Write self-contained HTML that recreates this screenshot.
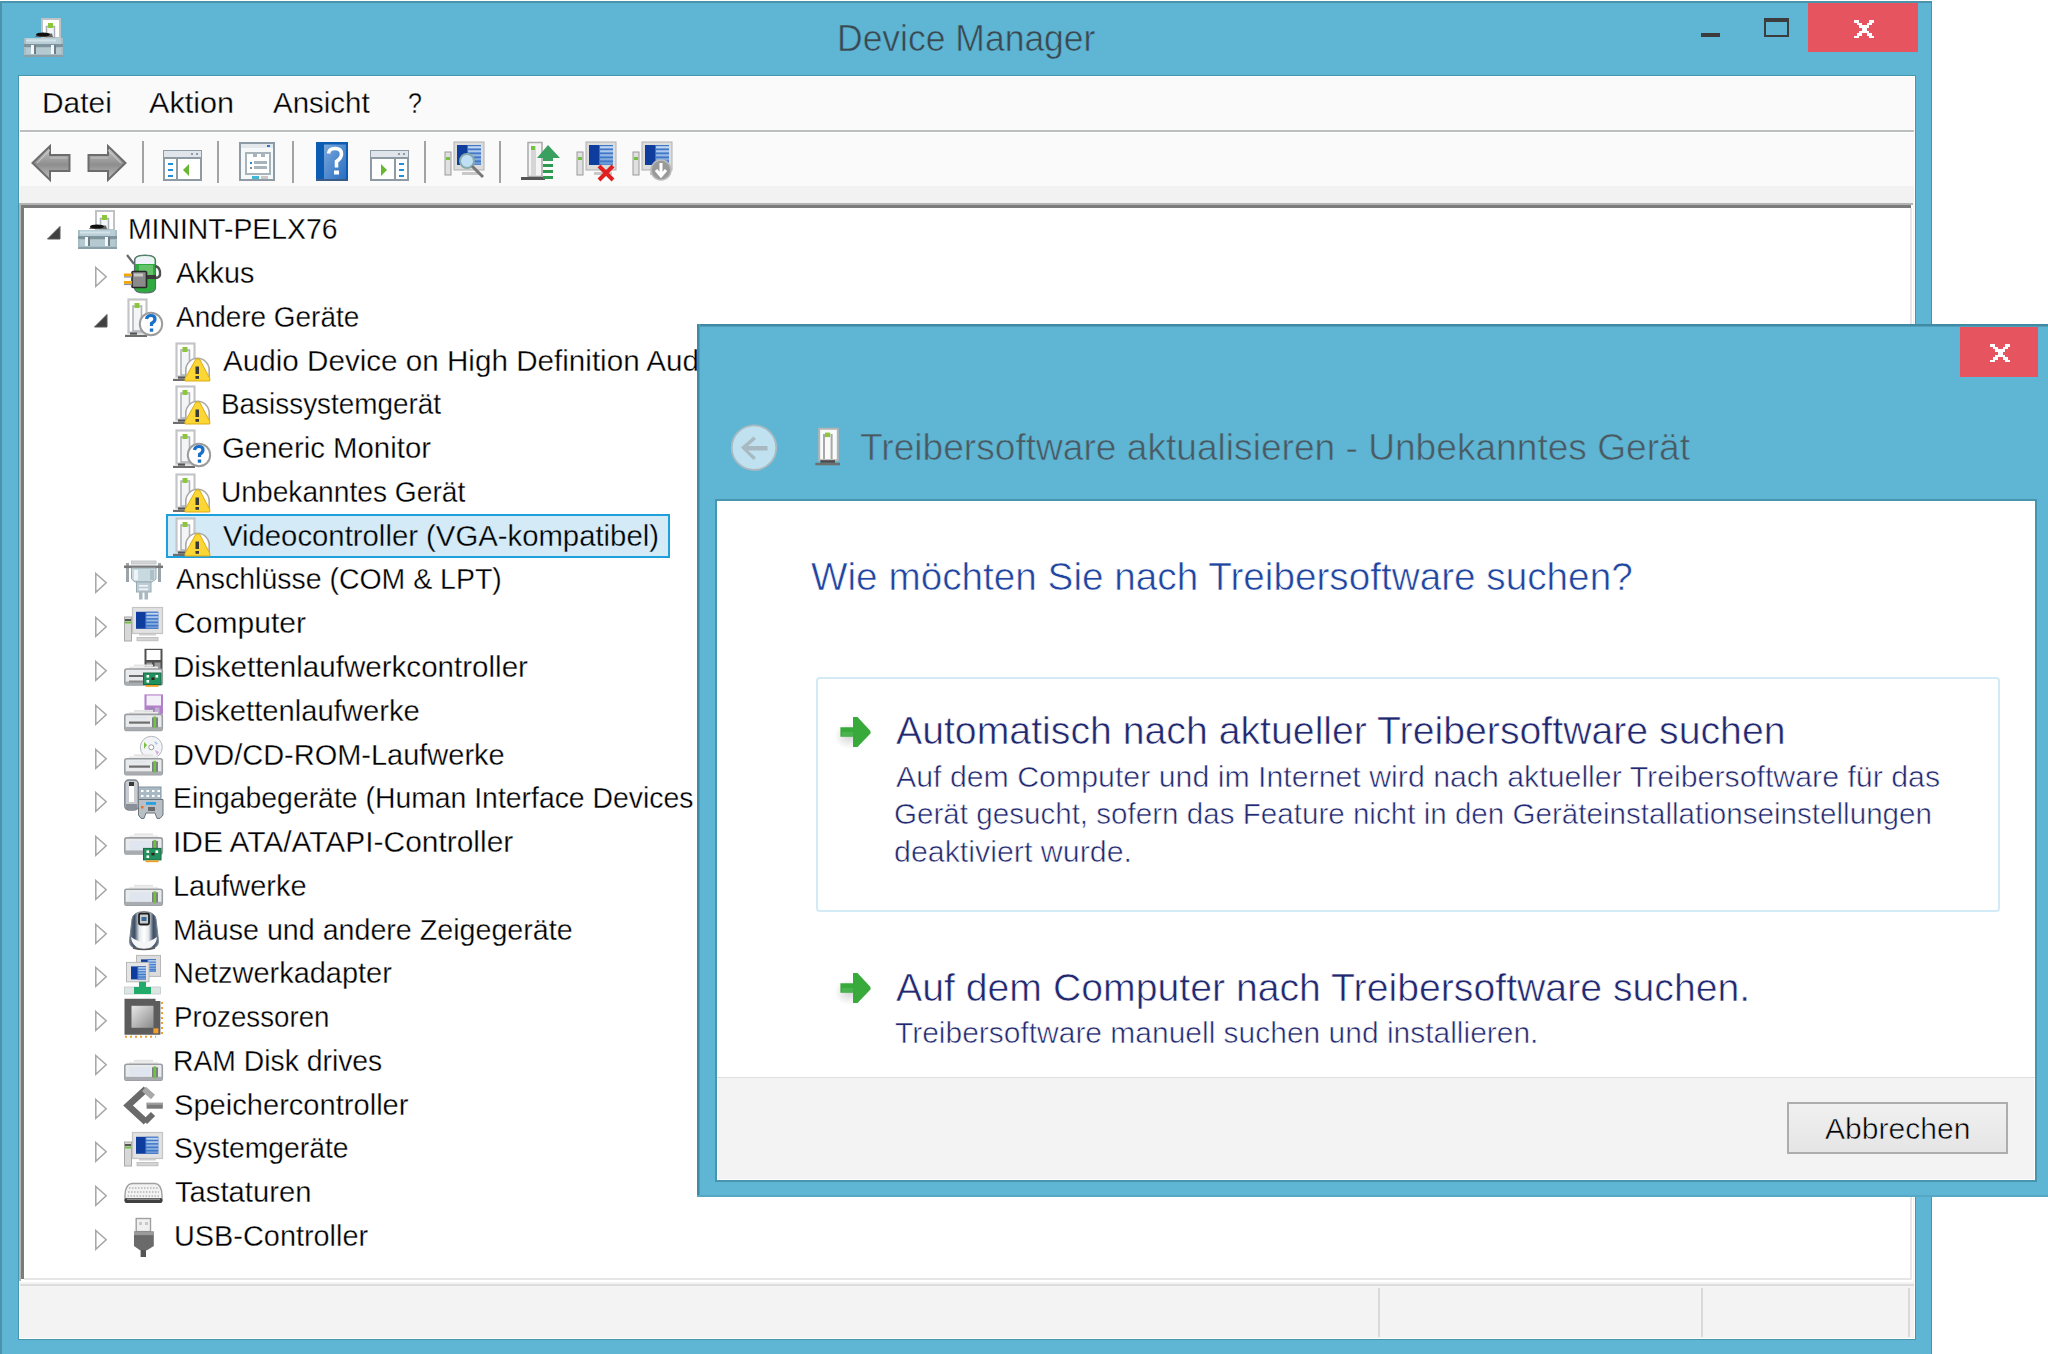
<!DOCTYPE html>
<html><head><meta charset="utf-8"><title>Device Manager</title>
<style>
html,body{margin:0;padding:0;width:2048px;height:1354px;overflow:hidden;background:#fff}
.t{position:absolute;white-space:nowrap;line-height:1;font-family:"Liberation Sans",sans-serif;transform-origin:0 0}
.b{position:absolute}
.i{position:absolute;overflow:visible}
</style></head><body>
<div class="b" style="left:0px;top:0px;width:2048px;height:1354px;background:#fff"></div>
<div class="b" style="left:0px;top:1px;width:1932px;height:1353px;background:#5fb6d4"></div>
<div class="b" style="left:0px;top:1px;width:1932px;height:2px;background:#4a93ad"></div>
<div class="b" style="left:0px;top:1px;width:2px;height:1353px;background:#4a93ad"></div>
<div class="b" style="left:1931px;top:1px;width:1px;height:1353px;background:#4a93ad"></div>
<svg width="0" height="0" style="position:absolute"><defs>
<linearGradient id="gArrow" x1="0" y1="0" x2="0" y2="1"><stop offset="0" stop-color="#c8c8c8"/><stop offset=".55" stop-color="#8e8e8e"/><stop offset="1" stop-color="#c0c0c0"/></linearGradient>
<linearGradient id="gBase" x1="0" y1="0" x2="0" y2="1"><stop offset="0" stop-color="#c9d3d8"/><stop offset="1" stop-color="#8c9ca5"/></linearGradient>
<linearGradient id="gDrive" x1="0" y1="0" x2="0" y2="1"><stop offset="0" stop-color="#f4f6f8"/><stop offset="1" stop-color="#c4c8cc"/></linearGradient>
<linearGradient id="gScreen" x1="0" y1="0" x2="1" y2="0"><stop offset="0" stop-color="#0d2f8c"/><stop offset=".45" stop-color="#1d4aa8"/><stop offset=".5" stop-color="#8fb3de"/><stop offset="1" stop-color="#c8dcf0"/></linearGradient>
<linearGradient id="gCpu" x1="0" y1="0" x2="1" y2="1"><stop offset="0" stop-color="#e8e8e8"/><stop offset="1" stop-color="#8a8a8a"/></linearGradient>
<linearGradient id="gBat" x1="0" y1="0" x2="1" y2="0"><stop offset="0" stop-color="#2f8a3a"/><stop offset=".5" stop-color="#69c06a"/><stop offset="1" stop-color="#2f8a3a"/></linearGradient>
<radialGradient id="gShadow"><stop offset="0" stop-color="#000" stop-opacity=".16"/><stop offset="1" stop-color="#000" stop-opacity="0"/></radialGradient>
</defs></svg><svg class="i" style="left:24px;top:18px" width="40" height="40" viewBox="0 0 40 40"><rect x="18" y="1" width="18" height="19" fill="#fff" stroke="#bfc3c6" stroke-width="2"/><rect x="22.5" y="8.5" width="8" height="11" fill="#f2f4f6" stroke="#a9b0b8" stroke-width="1.5"/><rect x="24" y="5" width="5" height="5" fill="#8cc63f"/><path d="M11 19 L13 16 L28 15.5 L29 19 Z" fill="#666"/><ellipse cx="19" cy="16.5" rx="7" ry="2" fill="#111"/><rect x="0" y="20" width="39" height="19" fill="#a9bdc5"/><rect x="2" y="20" width="35" height="6" fill="#b9ced6"/><rect x="2" y="21.5" width="30" height="2" fill="#d2e4ea"/><rect x="0" y="26" width="39" height="3" fill="#7e939b"/><rect x="2" y="30" width="35" height="6" fill="#b5c9d1"/><rect x="0" y="37" width="39" height="2" fill="#8aa0a8"/><rect x="7" y="27" width="3" height="9" fill="#f4f6f7"/><rect x="10" y="27" width="2" height="9" fill="#6d8088"/><rect x="27" y="27" width="3" height="9" fill="#f4f6f7"/><rect x="30" y="27" width="2" height="9" fill="#6d8088"/></svg>
<div class="t " style="left:837.2px;top:20.2px;font-size:37px;color:#3a4850;transform:scaleX(0.9592);-webkit-text-stroke:0.6px #5fb6d4;">Device Manager</div>
<div class="b" style="left:1701px;top:33px;width:19px;height:4px;background:#3c3c3c"></div>
<div class="b" style="left:1764px;top:18px;width:25px;height:19px;border:2px solid #3c3c3c;border-top-width:4px;box-sizing:border-box"></div>
<div class="b" style="left:1808px;top:3px;width:110px;height:49px;background:#e5545f"></div>
<svg class="i" style="left:1854.2px;top:20.2px" width="20.4" height="18.4" viewBox="0 0 20.40 18.41" fill="#fff" shape-rendering="crispEdges"><rect x="0.00" y="0.00" width="2.60" height="2.68"/><rect x="2.55" y="0.00" width="2.60" height="2.68"/><rect x="15.30" y="0.00" width="2.60" height="2.68"/><rect x="17.85" y="0.00" width="2.60" height="2.68"/><rect x="2.55" y="2.63" width="2.60" height="2.68"/><rect x="5.10" y="2.63" width="2.60" height="2.68"/><rect x="12.75" y="2.63" width="2.60" height="2.68"/><rect x="15.30" y="2.63" width="2.60" height="2.68"/><rect x="5.10" y="5.26" width="2.60" height="2.68"/><rect x="7.65" y="5.26" width="2.60" height="2.68"/><rect x="10.20" y="5.26" width="2.60" height="2.68"/><rect x="12.75" y="5.26" width="2.60" height="2.68"/><rect x="7.65" y="7.89" width="2.60" height="2.68"/><rect x="10.20" y="7.89" width="2.60" height="2.68"/><rect x="5.10" y="10.52" width="2.60" height="2.68"/><rect x="7.65" y="10.52" width="2.60" height="2.68"/><rect x="10.20" y="10.52" width="2.60" height="2.68"/><rect x="12.75" y="10.52" width="2.60" height="2.68"/><rect x="2.55" y="13.15" width="2.60" height="2.68"/><rect x="5.10" y="13.15" width="2.60" height="2.68"/><rect x="12.75" y="13.15" width="2.60" height="2.68"/><rect x="15.30" y="13.15" width="2.60" height="2.68"/><rect x="0.00" y="15.78" width="2.60" height="2.68"/><rect x="2.55" y="15.78" width="2.60" height="2.68"/><rect x="15.30" y="15.78" width="2.60" height="2.68"/><rect x="17.85" y="15.78" width="2.60" height="2.68"/></svg>
<div class="b" style="left:18px;top:75px;width:1898px;height:1265px;background:#4596ae"></div>
<div class="b" style="left:19px;top:76px;width:1896px;height:1263px;background:#fff"></div>
<div class="b" style="left:20px;top:77px;width:1894px;height:1261px;background:#f3f3f3"></div>
<div class="b" style="left:20px;top:77px;width:1894px;height:53px;background:#fafafa"></div>
<div class="b" style="left:20px;top:130px;width:1894px;height:2px;background:#bcbfbf"></div>
<div class="b" style="left:20px;top:132px;width:1894px;height:1px;background:#fff"></div>
<div class="b" style="left:20px;top:133px;width:1894px;height:53px;background:#fafafa"></div>
<div class="b" style="left:20px;top:186px;width:1894px;height:17px;background:#f2f2f2"></div>
<div class="t " style="left:42.3px;top:89.0px;font-size:29px;color:#000;transform:scaleX(1.0305);-webkit-text-stroke:0.3px #fafafa;">Datei</div>
<div class="t " style="left:149.4px;top:89.0px;font-size:29px;color:#000;transform:scaleX(1.0542);-webkit-text-stroke:0.3px #fafafa;">Aktion</div>
<div class="t " style="left:273.4px;top:89.0px;font-size:29px;color:#000;transform:scaleX(1.0166);-webkit-text-stroke:0.3px #fafafa;">Ansicht</div>
<div class="t " style="left:408.0px;top:89.0px;font-size:29px;color:#000;transform:scaleX(0.8621);-webkit-text-stroke:0.3px #fafafa;">?</div>
<div class="b" style="left:142px;top:141px;width:2px;height:42px;background:#a3a3a3"></div>
<div class="b" style="left:217px;top:141px;width:2px;height:42px;background:#a3a3a3"></div>
<div class="b" style="left:292px;top:141px;width:2px;height:42px;background:#a3a3a3"></div>
<div class="b" style="left:424px;top:141px;width:2px;height:42px;background:#a3a3a3"></div>
<div class="b" style="left:499px;top:141px;width:2px;height:42px;background:#a3a3a3"></div>
<svg class="i" style="left:31px;top:145px" width="40" height="37" viewBox="0 0 40 37"><path d="M1.5 18 L19 1 L19 10 L38.5 10 L38.5 26 L19 26 L19 35 Z" fill="url(#gArrow)" stroke="#6c6c6c" stroke-width="2" stroke-linejoin="miter"/><path d="M19 13 L36 13 M6 18 L19 5" stroke="#d0d0d0" stroke-width="1.2" opacity=".7"/></svg>
<svg class="i" style="left:87px;top:145px" width="40" height="37" viewBox="0 0 40 37"><g transform="translate(40,0) scale(-1,1)"><path d="M1.5 18 L19 1 L19 10 L38.5 10 L38.5 26 L19 26 L19 35 Z" fill="url(#gArrow)" stroke="#6c6c6c" stroke-width="2" stroke-linejoin="miter"/><path d="M19 13 L36 13 M6 18 L19 5" stroke="#d0d0d0" stroke-width="1.2" opacity=".7"/></g></svg>
<svg class="i" style="left:163px;top:150px" width="39" height="31" viewBox="0 0 39 31"><rect x="1" y="1" width="37" height="29" fill="#fff" stroke="#8e9aa4" stroke-width="2"/><rect x="1" y="1" width="37" height="7" fill="#dfe5ea"/><rect x="1" y="7" width="37" height="2" fill="#8e9aa4"/><rect x="28" y="3" width="2" height="2" fill="#8e9aa4"/><rect x="33" y="3" width="2" height="2" fill="#8e9aa4"/><rect x="13" y="9" width="2" height="21" fill="#8e9aa4"/><rect x="5" y="13" width="5" height="2" fill="#2090d8"/><rect x="5" y="19" width="5" height="2" fill="#2090d8"/><rect x="5" y="25" width="5" height="2" fill="#2090d8"/><path d="M20 20 L26 14 L26 26 Z" fill="#66b830"/></svg>
<svg class="i" style="left:239px;top:142px" width="36" height="39" viewBox="0 0 36 39"><rect x="1" y="1" width="34" height="37" fill="#f6f8fa" stroke="#8e9aa4" stroke-width="2"/><rect x="2" y="2" width="32" height="4" fill="#e4e8ec"/><rect x="28" y="3" width="3" height="2" fill="#2a7ac8"/><rect x="7" y="11" width="24" height="21" fill="#fff" stroke="#a8b4bc" stroke-width="2"/><rect x="14" y="11" width="4" height="4" fill="#a8b4bc"/><rect x="22" y="11" width="4" height="4" fill="#a8b4bc"/><rect x="11" y="20" width="2" height="2" fill="#2a8ad8"/><rect x="15" y="19" width="13" height="3" fill="#a8b4bc"/><rect x="11" y="25" width="2" height="2" fill="#888"/><rect x="15" y="24" width="13" height="3" fill="#a8b4bc"/><rect x="13" y="34" width="7" height="3" fill="#40b8d8"/><rect x="22" y="34" width="7" height="3" fill="#c8c8c8"/></svg>
<svg class="i" style="left:316px;top:142px" width="32" height="39" viewBox="0 0 32 39"><defs><linearGradient id="gHelp" x1="0" y1="0" x2="1" y2="1"><stop offset="0" stop-color="#7aa8dc"/><stop offset="1" stop-color="#2a6fc2"/></linearGradient></defs><rect x="0" y="0" width="32" height="39" fill="#0b5cb2"/><rect x="8" y="2.5" width="22" height="34.5" fill="url(#gHelp)"/><rect x="0" y="37" width="32" height="2" fill="#3b5a86"/><path d="M12.5 11.5 Q13 6.5 19 6.5 Q25.5 6.5 25.5 12 Q25.5 16 20.5 19.5 L20.5 25.5" stroke="#fff" stroke-width="3.6" fill="none"/><rect x="18" y="28.5" width="5" height="4" fill="#fff"/></svg>
<svg class="i" style="left:370px;top:150px" width="39" height="31" viewBox="0 0 39 31"><rect x="1" y="1" width="37" height="29" fill="#fff" stroke="#8e9aa4" stroke-width="2"/><rect x="1" y="1" width="37" height="7" fill="#dfe5ea"/><rect x="1" y="7" width="37" height="2" fill="#8e9aa4"/><rect x="28" y="3" width="2" height="2" fill="#8e9aa4"/><rect x="33" y="3" width="2" height="2" fill="#8e9aa4"/><rect x="24" y="9" width="2" height="21" fill="#8e9aa4"/><rect x="29" y="13" width="5" height="2" fill="#2090d8"/><rect x="29" y="19" width="5" height="2" fill="#2090d8"/><rect x="29" y="25" width="5" height="2" fill="#2090d8"/><path d="M17 20 L11 14 L11 26 Z" fill="#66b830"/></svg>
<svg class="i" style="left:445px;top:142px" width="40" height="37" viewBox="0 0 40 37"><g transform="translate(0,0)"><rect x="0" y="10" width="6" height="23" fill="#e0e0e0" stroke="#999"/><rect x="1" y="15" width="4" height="3" fill="#77c043"/><rect x="9" y="0" width="30" height="28" fill="#dcdcdc" stroke="#b0b0b0"/><rect x="12" y="3" width="24" height="20" fill="#0f3d9e"/><rect x="22.08" y="3" width="13.92" height="20" fill="#3f78c8"/><rect x="23.08" y="4.20" width="12.92" height="2.20" fill="#d8e8f8" opacity="0.85"/><rect x="23.08" y="8.20" width="12.92" height="2.20" fill="#d8e8f8" opacity="0.72"/><rect x="23.08" y="12.20" width="12.92" height="2.20" fill="#d8e8f8" opacity="0.59"/><rect x="23.08" y="16.20" width="12.92" height="2.20" fill="#d8e8f8" opacity="0.46"/><rect x="23.08" y="20.20" width="12.92" height="2.20" fill="#d8e8f8" opacity="0.33"/><rect x="17" y="30" width="18" height="3" fill="#c8c8c8"/></g><circle cx="22" cy="19" r="7" fill="#bfe0f4" stroke="#8aa" stroke-width="2"/><path d="M27 24 L38 35" stroke="#777" stroke-width="3"/></svg>
<svg class="i" style="left:521px;top:142px" width="40" height="39" viewBox="0 0 40 39"><rect x="7" y="0.5" width="14" height="34" fill="#f4f4f4" stroke="#a9a9a9" stroke-width="1.5"/><rect x="10" y="4" width="5" height="30" fill="#d6d6d6"/><rect x="10" y="4" width="4" height="4" fill="#77c043"/><rect x="0" y="35" width="24" height="3" fill="#555"/><path d="M16 16 L27 3 L39 16 L32 16 L32 19 L22 19 L22 16 Z" fill="#3aa060"/><rect x="22" y="22" width="10" height="3" fill="#2e9a50"/><rect x="22" y="28" width="10" height="3" fill="#2e9a50"/><rect x="22" y="34" width="10" height="3" fill="#2e9a50"/></svg>
<svg class="i" style="left:577px;top:142px" width="40" height="39" viewBox="0 0 40 39"><g transform="translate(0,0)"><rect x="0" y="10" width="6" height="23" fill="#e0e0e0" stroke="#999"/><rect x="1" y="15" width="4" height="3" fill="#77c043"/><rect x="9" y="0" width="30" height="28" fill="#dcdcdc" stroke="#b0b0b0"/><rect x="12" y="3" width="24" height="20" fill="#0f3d9e"/><rect x="22.08" y="3" width="13.92" height="20" fill="#3f78c8"/><rect x="23.08" y="4.20" width="12.92" height="2.20" fill="#d8e8f8" opacity="0.85"/><rect x="23.08" y="8.20" width="12.92" height="2.20" fill="#d8e8f8" opacity="0.72"/><rect x="23.08" y="12.20" width="12.92" height="2.20" fill="#d8e8f8" opacity="0.59"/><rect x="23.08" y="16.20" width="12.92" height="2.20" fill="#d8e8f8" opacity="0.46"/><rect x="23.08" y="20.20" width="12.92" height="2.20" fill="#d8e8f8" opacity="0.33"/><rect x="17" y="30" width="18" height="3" fill="#c8c8c8"/></g><path d="M22 24 L36 38 M36 24 L22 38" stroke="#e02020" stroke-width="4"/></svg>
<svg class="i" style="left:633px;top:142px" width="40" height="39" viewBox="0 0 40 39"><g transform="translate(0,0)"><rect x="0" y="10" width="6" height="23" fill="#e0e0e0" stroke="#999"/><rect x="1" y="15" width="4" height="3" fill="#77c043"/><rect x="9" y="0" width="30" height="28" fill="#dcdcdc" stroke="#b0b0b0"/><rect x="12" y="3" width="24" height="20" fill="#0f3d9e"/><rect x="22.08" y="3" width="13.92" height="20" fill="#3f78c8"/><rect x="23.08" y="4.20" width="12.92" height="2.20" fill="#d8e8f8" opacity="0.85"/><rect x="23.08" y="8.20" width="12.92" height="2.20" fill="#d8e8f8" opacity="0.72"/><rect x="23.08" y="12.20" width="12.92" height="2.20" fill="#d8e8f8" opacity="0.59"/><rect x="23.08" y="16.20" width="12.92" height="2.20" fill="#d8e8f8" opacity="0.46"/><rect x="23.08" y="20.20" width="12.92" height="2.20" fill="#d8e8f8" opacity="0.33"/><rect x="17" y="30" width="18" height="3" fill="#c8c8c8"/></g><circle cx="28" cy="28" r="10" fill="#9a9a9a" stroke="#bbb" stroke-width="1.5"/><path d="M28 21 V33 M23 28 L28 34 L33 28" stroke="#fff" stroke-width="3" fill="none"/></svg>
<div class="b" style="left:19px;top:203px;width:1894px;height:1079px;background:#fff"></div>
<div class="b" style="left:19px;top:203px;width:1894px;height:2px;background:#b3b5b5"></div>
<div class="b" style="left:19px;top:203px;width:2px;height:1078px;background:#b3b5b5"></div>
<div class="b" style="left:21px;top:205px;width:1890px;height:3px;background:#7b7b7b"></div>
<div class="b" style="left:21px;top:205px;width:3px;height:1074px;background:#7b7b7b"></div>
<div class="b" style="left:1910px;top:208px;width:2px;height:1072px;background:#e6e6e6"></div>
<div class="b" style="left:24px;top:1278px;width:1888px;height:2px;background:#e6e6e6"></div>
<div class="b" style="left:20px;top:1284px;width:1894px;height:2px;background:#dcdcdc"></div>
<div class="b" style="left:20px;top:1286px;width:1894px;height:52px;background:#f3f3f3"></div>
<div class="b" style="left:1378px;top:1288px;width:2px;height:49px;background:#d9d9d9"></div>
<div class="b" style="left:1701px;top:1288px;width:2px;height:49px;background:#d9d9d9"></div>
<div class="b" style="left:1908px;top:1288px;width:2px;height:49px;background:#d9d9d9"></div>
<div class="b" style="left:166px;top:514px;width:504px;height:44px;background:#d5eaf7;border:2.5px solid #1ea0dc;box-sizing:border-box"></div>
<svg class="i" style="left:46px;top:225px" width="15" height="15" viewBox="0 0 15 15"><path d="M14 1.5 L14 14 L1.5 14 Z" fill="#404040" stroke="#5a5a5a" stroke-width="1"/></svg>
<svg class="i" style="left:78px;top:210px" width="40" height="40" viewBox="0 0 40 40"><rect x="18" y="1" width="18" height="19" fill="#fff" stroke="#bfc3c6" stroke-width="2"/><rect x="22.5" y="8.5" width="8" height="11" fill="#f2f4f6" stroke="#a9b0b8" stroke-width="1.5"/><rect x="24" y="5" width="5" height="5" fill="#8cc63f"/><path d="M11 19 L13 16 L28 15.5 L29 19 Z" fill="#666"/><ellipse cx="19" cy="16.5" rx="7" ry="2" fill="#111"/><rect x="0" y="20" width="39" height="19" fill="#a9bdc5"/><rect x="2" y="20" width="35" height="6" fill="#b9ced6"/><rect x="2" y="21.5" width="30" height="2" fill="#d2e4ea"/><rect x="0" y="26" width="39" height="3" fill="#7e939b"/><rect x="2" y="30" width="35" height="6" fill="#b5c9d1"/><rect x="0" y="37" width="39" height="2" fill="#8aa0a8"/><rect x="7" y="27" width="3" height="9" fill="#f4f6f7"/><rect x="10" y="27" width="2" height="9" fill="#6d8088"/><rect x="27" y="27" width="3" height="9" fill="#f4f6f7"/><rect x="30" y="27" width="2" height="9" fill="#6d8088"/></svg>
<div class="t " style="left:127.7px;top:215.3px;font-size:29px;color:#000;transform:scaleX(0.9771);-webkit-text-stroke:0.3px #fff;">MININT-PELX76</div>
<svg class="i" style="left:95px;top:266px" width="13" height="22" viewBox="0 0 13 22"><path d="M0.8 1.5 L11.2 10.8 L0.8 20.3 Z" fill="none" stroke="#a6a6a6" stroke-width="1.5"/></svg>
<svg class="i" style="left:124px;top:254px" width="40" height="40" viewBox="0 0 40 40"><path d="M3 1 L10 10" stroke="#6a6a6a" stroke-width="2.2"/><path d="M10.5 6 Q10.5 1 21 1 Q31.5 1 31.5 6 L31.5 34 Q31.5 39 21 39 Q10.5 39 10.5 34 Z" fill="#2eaa3e" stroke="#5a6a74" stroke-width="1.2"/><path d="M11.5 6 Q11.5 2 21 2 Q30.5 2 30.5 6 L30.5 10 L11.5 10 Z" fill="#eef2f8"/><rect x="15" y="11" width="14" height="14" fill="#7ccc7e" opacity=".7"/><path d="M31.5 12 Q37 14 36 21 Q35 24 31 24" stroke="#505050" stroke-width="2.4" fill="none"/><path d="M22 21 L32 21 L32 25 L22 25 Z" fill="#3a3a3a"/><rect x="8" y="17.5" width="14.5" height="16" rx="1" fill="#8a8a8a" stroke="#2a2a2a" stroke-width="1.6"/><rect x="10" y="19.5" width="9" height="3" fill="#c8c8c8"/><rect x="0" y="19.5" width="8" height="2.8" fill="#f5a800"/><rect x="0" y="22.3" width="8" height="1.3" fill="#8a8f9a"/><rect x="0" y="27" width="8" height="2.8" fill="#f5a800"/><rect x="0" y="29.8" width="8" height="1.3" fill="#8a8f9a"/></svg>
<div class="t " style="left:175.7px;top:259.0px;font-size:29px;color:#000;transform:scaleX(0.9922);-webkit-text-stroke:0.3px #fff;">Akkus</div>
<svg class="i" style="left:93px;top:313px" width="15" height="15" viewBox="0 0 15 15"><path d="M14 1.5 L14 14 L1.5 14 Z" fill="#404040" stroke="#5a5a5a" stroke-width="1"/></svg>
<svg class="i" style="left:124px;top:298px" width="40" height="40" viewBox="0 0 40 40"><g transform="translate(0,0)"><rect x="4.5" y="1.5" width="18" height="33" fill="#fff" stroke="#c3c5c8" stroke-width="2.2"/><rect x="9" y="8" width="8.5" height="25" fill="#f4f5f7" stroke="#b0b4ba" stroke-width="1.6"/><rect x="10.5" y="5" width="5" height="5" fill="#8cc63f"/><rect x="6" y="34.5" width="7" height="2.2" fill="#555"/><rect x="1" y="36.8" width="22" height="2.2" fill="#6e6e6e"/></g><circle cx="27" cy="26" r="11.2" fill="#fff" stroke="#9c9c9c" stroke-width="2"/><path d="M22.5 21 Q23 17.5 27 17.5 Q31 17.5 31 21 Q31 23.5 27.5 25.5 L27.5 28" stroke="#1a6fc8" stroke-width="3.2" fill="none"/><rect x="25.8" y="30.5" width="3.4" height="3.2" fill="#1a6fc8"/></svg>
<div class="t " style="left:175.7px;top:302.8px;font-size:29px;color:#000;transform:scaleX(0.9633);-webkit-text-stroke:0.3px #fff;">Andere Geräte</div>
<svg class="i" style="left:172px;top:342px" width="40" height="40" viewBox="0 0 40 40"><g transform="translate(0,0)"><rect x="4.5" y="1.5" width="18" height="33" fill="#fff" stroke="#c3c5c8" stroke-width="2.2"/><rect x="9" y="8" width="8.5" height="25" fill="#f4f5f7" stroke="#b0b4ba" stroke-width="1.6"/><rect x="10.5" y="5" width="5" height="5" fill="#8cc63f"/><rect x="6" y="34.5" width="7" height="2.2" fill="#555"/><rect x="1" y="36.8" width="22" height="2.2" fill="#6e6e6e"/></g><path d="M13.8 38 L13.8 28 A11.7 11.7 0 0 1 37.2 28 L37.2 38 Z" fill="#fff" stroke="#a9a9a9" stroke-width="1.6"/><path d="M24 17 L27.5 17 L37.8 36.5 L37.8 39 L13 39 L13 36.5 Z" fill="#fcd634" stroke="#dcae10" stroke-width="1"/><rect x="23.5" y="24.5" width="3.5" height="7.5" fill="#3a3a3a"/><rect x="23.5" y="34" width="3.5" height="2.8" fill="#3a3a3a"/></svg>
<div class="t " style="left:223.0px;top:346.6px;font-size:29px;color:#000;transform:scaleX(1.0216);-webkit-text-stroke:0.3px #fff;">Audio Device on High Definition Audio</div>
<svg class="i" style="left:172px;top:385px" width="40" height="40" viewBox="0 0 40 40"><g transform="translate(0,0)"><rect x="4.5" y="1.5" width="18" height="33" fill="#fff" stroke="#c3c5c8" stroke-width="2.2"/><rect x="9" y="8" width="8.5" height="25" fill="#f4f5f7" stroke="#b0b4ba" stroke-width="1.6"/><rect x="10.5" y="5" width="5" height="5" fill="#8cc63f"/><rect x="6" y="34.5" width="7" height="2.2" fill="#555"/><rect x="1" y="36.8" width="22" height="2.2" fill="#6e6e6e"/></g><path d="M13.8 38 L13.8 28 A11.7 11.7 0 0 1 37.2 28 L37.2 38 Z" fill="#fff" stroke="#a9a9a9" stroke-width="1.6"/><path d="M24 17 L27.5 17 L37.8 36.5 L37.8 39 L13 39 L13 36.5 Z" fill="#fcd634" stroke="#dcae10" stroke-width="1"/><rect x="23.5" y="24.5" width="3.5" height="7.5" fill="#3a3a3a"/><rect x="23.5" y="34" width="3.5" height="2.8" fill="#3a3a3a"/></svg>
<div class="t " style="left:220.8px;top:390.3px;font-size:29px;color:#000;transform:scaleX(0.9618);-webkit-text-stroke:0.3px #fff;">Basissystemgerät</div>
<svg class="i" style="left:172px;top:429px" width="40" height="40" viewBox="0 0 40 40"><g transform="translate(0,0)"><rect x="4.5" y="1.5" width="18" height="33" fill="#fff" stroke="#c3c5c8" stroke-width="2.2"/><rect x="9" y="8" width="8.5" height="25" fill="#f4f5f7" stroke="#b0b4ba" stroke-width="1.6"/><rect x="10.5" y="5" width="5" height="5" fill="#8cc63f"/><rect x="6" y="34.5" width="7" height="2.2" fill="#555"/><rect x="1" y="36.8" width="22" height="2.2" fill="#6e6e6e"/></g><circle cx="27" cy="26" r="11.2" fill="#fff" stroke="#9c9c9c" stroke-width="2"/><path d="M22.5 21 Q23 17.5 27 17.5 Q31 17.5 31 21 Q31 23.5 27.5 25.5 L27.5 28" stroke="#1a6fc8" stroke-width="3.2" fill="none"/><rect x="25.8" y="30.5" width="3.4" height="3.2" fill="#1a6fc8"/></svg>
<div class="t " style="left:221.5px;top:434.1px;font-size:29px;color:#000;transform:scaleX(1.0132);-webkit-text-stroke:0.3px #fff;">Generic Monitor</div>
<svg class="i" style="left:172px;top:473px" width="40" height="40" viewBox="0 0 40 40"><g transform="translate(0,0)"><rect x="4.5" y="1.5" width="18" height="33" fill="#fff" stroke="#c3c5c8" stroke-width="2.2"/><rect x="9" y="8" width="8.5" height="25" fill="#f4f5f7" stroke="#b0b4ba" stroke-width="1.6"/><rect x="10.5" y="5" width="5" height="5" fill="#8cc63f"/><rect x="6" y="34.5" width="7" height="2.2" fill="#555"/><rect x="1" y="36.8" width="22" height="2.2" fill="#6e6e6e"/></g><path d="M13.8 38 L13.8 28 A11.7 11.7 0 0 1 37.2 28 L37.2 38 Z" fill="#fff" stroke="#a9a9a9" stroke-width="1.6"/><path d="M24 17 L27.5 17 L37.8 36.5 L37.8 39 L13 39 L13 36.5 Z" fill="#fcd634" stroke="#dcae10" stroke-width="1"/><rect x="23.5" y="24.5" width="3.5" height="7.5" fill="#3a3a3a"/><rect x="23.5" y="34" width="3.5" height="2.8" fill="#3a3a3a"/></svg>
<div class="t " style="left:220.9px;top:477.9px;font-size:29px;color:#000;transform:scaleX(0.9715);-webkit-text-stroke:0.3px #fff;">Unbekanntes Gerät</div>
<svg class="i" style="left:172px;top:517px" width="40" height="40" viewBox="0 0 40 40"><g transform="translate(0,0)"><rect x="4.5" y="1.5" width="18" height="33" fill="#fff" stroke="#c3c5c8" stroke-width="2.2"/><rect x="9" y="8" width="8.5" height="25" fill="#f4f5f7" stroke="#b0b4ba" stroke-width="1.6"/><rect x="10.5" y="5" width="5" height="5" fill="#8cc63f"/><rect x="6" y="34.5" width="7" height="2.2" fill="#555"/><rect x="1" y="36.8" width="22" height="2.2" fill="#6e6e6e"/></g><path d="M13.8 38 L13.8 28 A11.7 11.7 0 0 1 37.2 28 L37.2 38 Z" fill="#fff" stroke="#a9a9a9" stroke-width="1.6"/><path d="M24 17 L27.5 17 L37.8 36.5 L37.8 39 L13 39 L13 36.5 Z" fill="#fcd634" stroke="#dcae10" stroke-width="1"/><rect x="23.5" y="24.5" width="3.5" height="7.5" fill="#3a3a3a"/><rect x="23.5" y="34" width="3.5" height="2.8" fill="#3a3a3a"/></svg>
<div class="t " style="left:222.9px;top:521.6px;font-size:29px;color:#000;transform:scaleX(1.0105);-webkit-text-stroke:0.3px #d5eaf7;">Videocontroller (VGA-kompatibel)</div>
<svg class="i" style="left:95px;top:572px" width="13" height="22" viewBox="0 0 13 22"><path d="M0.8 1.5 L11.2 10.8 L0.8 20.3 Z" fill="none" stroke="#a6a6a6" stroke-width="1.5"/></svg>
<svg class="i" style="left:124px;top:560px" width="40" height="40" viewBox="0 0 40 40"><rect x="7.5" y="1" width="24.5" height="3" fill="#d4d8da" stroke="#b8bcbe" stroke-width=".8"/><rect x="2" y="3" width="3" height="19" fill="#9aa4aa"/><rect x="34" y="3" width="3" height="19" fill="#9aa4aa"/><rect x="0" y="5.5" width="39" height="2.6" fill="#787878"/><path d="M7.5 8 L32 8 L32 19 L28 22 L11 22 L7.5 19 Z" fill="#c9d9e0" stroke="#98aab2" stroke-width="1"/><rect x="10" y="10" width="4" height="10" fill="#eef4f7"/><rect x="26" y="10" width="4" height="10" fill="#aebfc7"/><rect x="12.5" y="22" width="14.5" height="10" fill="#bccdd5" stroke="#98aab2" stroke-width="1"/><rect x="15" y="25" width="9" height="1.6" fill="#f2f6f8"/><rect x="15" y="28.5" width="9" height="1.6" fill="#f2f6f8"/><rect x="15" y="32" width="3.5" height="7.5" fill="#aab8c0"/><rect x="20.5" y="32" width="3.5" height="7.5" fill="#aab8c0"/></svg>
<div class="t " style="left:175.7px;top:565.4px;font-size:29px;color:#000;transform:scaleX(0.9813);-webkit-text-stroke:0.3px #fff;">Anschlüsse (COM &amp; LPT)</div>
<svg class="i" style="left:95px;top:616px" width="13" height="22" viewBox="0 0 13 22"><path d="M0.8 1.5 L11.2 10.8 L0.8 20.3 Z" fill="none" stroke="#a6a6a6" stroke-width="1.5"/></svg>
<svg class="i" style="left:124px;top:604px" width="40" height="40" viewBox="0 0 40 40"><rect x="0.5" y="13" width="7" height="24" fill="#d8d8d8" stroke="#a8a8a8" stroke-width="1"/><rect x="1" y="15" width="6" height="2" fill="#555"/><rect x="1" y="17.5" width="6" height="2" fill="#74c043"/><rect x="15" y="29.5" width="17" height="2" fill="#d0d0d0"/><rect x="13" y="33.5" width="21" height="3.3" fill="#d4d4d4" stroke="#b8b8b8" stroke-width=".8"/><rect x="8.5" y="3.5" width="30" height="26" fill="#e2e2e2" stroke="#c4c4c4" stroke-width="1.2"/><rect x="12" y="7.8" width="22.2" height="17" fill="#0f3d9e"/><rect x="21.32" y="7.8" width="12.88" height="17" fill="#3f78c8"/><rect x="22.32" y="8.82" width="11.88" height="1.87" fill="#d8e8f8" opacity="0.85"/><rect x="22.32" y="12.22" width="11.88" height="1.87" fill="#d8e8f8" opacity="0.72"/><rect x="22.32" y="15.62" width="11.88" height="1.87" fill="#d8e8f8" opacity="0.59"/><rect x="22.32" y="19.02" width="11.88" height="1.87" fill="#d8e8f8" opacity="0.46"/><rect x="22.32" y="22.42" width="11.88" height="1.87" fill="#d8e8f8" opacity="0.33"/></svg>
<div class="t " style="left:174.2px;top:609.2px;font-size:29px;color:#000;transform:scaleX(1.0365);-webkit-text-stroke:0.3px #fff;">Computer</div>
<svg class="i" style="left:95px;top:660px" width="13" height="22" viewBox="0 0 13 22"><path d="M0.8 1.5 L11.2 10.8 L0.8 20.3 Z" fill="none" stroke="#a6a6a6" stroke-width="1.5"/></svg>
<svg class="i" style="left:124px;top:648px" width="40" height="40" viewBox="0 0 40 40"><rect x="20.5" y="0.8" width="18" height="20.5" fill="#505050"/><rect x="22.5" y="2" width="14" height="10" fill="#fff"/><rect x="22.5" y="14.5" width="5.5" height="6" fill="#9a9a9a"/><rect x="30.5" y="14.5" width="6" height="6" fill="#9a9a9a"/><rect x="10" y="16.5" width="19" height="2" fill="#e4e4e4"/><rect x="5" y="18.5" width="29" height="2.5" fill="#ececec"/><rect x="0.8" y="21" width="37.5" height="16" rx="2" fill="#e9eaec" stroke="#9a9ea2" stroke-width="1.6"/><rect x="0.8" y="33.5" width="37.5" height="3.5" fill="#a8acb0"/><rect x="5" y="27" width="15" height="2" fill="#6a6a6a"/><rect x="5" y="32.5" width="15" height="2" fill="#8a8a8a"/><rect x="19.5" y="25" width="17.5" height="11.5" fill="#23915e" stroke="#176b44" stroke-width="1"/><rect x="22.5" y="27" width="2.6" height="2.6" fill="#fff"/><rect x="31.5" y="27" width="2.6" height="2.6" fill="#fff"/><rect x="22.5" y="32" width="2.6" height="2.6" fill="#fff"/><rect x="27.5" y="29.5" width="3" height="2.5" fill="#3a1a1a"/><rect x="21.5" y="37" width="13" height="1.8" fill="#f0a020"/></svg>
<div class="t " style="left:173.3px;top:653.0px;font-size:29px;color:#000;transform:scaleX(1.0196);-webkit-text-stroke:0.3px #fff;">Diskettenlaufwerkcontroller</div>
<svg class="i" style="left:95px;top:704px" width="13" height="22" viewBox="0 0 13 22"><path d="M0.8 1.5 L11.2 10.8 L0.8 20.3 Z" fill="none" stroke="#a6a6a6" stroke-width="1.5"/></svg>
<svg class="i" style="left:124px;top:692px" width="40" height="40" viewBox="0 0 40 40"><rect x="20.5" y="2.4" width="18.5" height="19.5" fill="#b27fcb"/><rect x="22.5" y="3.5" width="14.5" height="10" fill="#f4f0f8"/><rect x="25" y="15.5" width="4.5" height="6.4" fill="#9a8aa8"/><rect x="31" y="15.5" width="4.5" height="6.4" fill="#c0b0d0"/><rect x="10" y="17.9" width="19" height="2" fill="#e4e4e4"/><rect x="5" y="19.9" width="29" height="2.5" fill="#ececec"/><rect x="0.8" y="22.4" width="37.5" height="16" rx="2" fill="#e9eaec" stroke="#9a9ea2" stroke-width="1.6"/><rect x="0.8" y="34.9" width="37.5" height="3.5" fill="#a8acb0"/><rect x="28" y="25.4" width="6" height="10" fill="#7a7f84"/><rect x="29.5" y="24.4" width="2.6" height="12" fill="#74c043"/><rect x="5" y="29.5" width="21" height="2.2" fill="#6e6e6e"/><rect x="8" y="25" width="14" height="1.5" fill="#dfe6f0"/></svg>
<div class="t " style="left:173.4px;top:696.7px;font-size:29px;color:#000;transform:scaleX(1.0071);-webkit-text-stroke:0.3px #fff;">Diskettenlaufwerke</div>
<svg class="i" style="left:95px;top:748px" width="13" height="22" viewBox="0 0 13 22"><path d="M0.8 1.5 L11.2 10.8 L0.8 20.3 Z" fill="none" stroke="#a6a6a6" stroke-width="1.5"/></svg>
<svg class="i" style="left:124px;top:736px" width="40" height="40" viewBox="0 0 40 40"><circle cx="27.3" cy="11.3" r="11" fill="#f2f4f8" stroke="#b4b8bc" stroke-width="1"/><path d="M20 6 L23 9 L20 13 Z" fill="#7cc043"/><path d="M31 14 L35 16 L33 19 Z" fill="#d8a8d8"/><path d="M30 5 L34 7 L32 9 Z" fill="#a8c8e8"/><circle cx="27.3" cy="11.3" r="2.5" fill="#fff" stroke="#9a9a9a" stroke-width="1"/><rect x="10" y="18.3" width="19" height="2" fill="#e4e4e4"/><rect x="5" y="20.3" width="29" height="2.5" fill="#ececec"/><rect x="0.8" y="22.8" width="37.5" height="16" rx="2" fill="#e9eaec" stroke="#9a9ea2" stroke-width="1.6"/><rect x="0.8" y="35.3" width="37.5" height="3.5" fill="#a8acb0"/><rect x="28" y="25.8" width="6" height="10" fill="#7a7f84"/><rect x="29.5" y="24.8" width="2.6" height="12" fill="#74c043"/><rect x="5" y="29.5" width="21" height="2.2" fill="#6e6e6e"/><rect x="8" y="25" width="14" height="1.5" fill="#dfe6f0"/></svg>
<div class="t " style="left:173.4px;top:740.5px;font-size:29px;color:#000;transform:scaleX(0.9991);-webkit-text-stroke:0.3px #fff;">DVD/CD-ROM-Laufwerke</div>
<svg class="i" style="left:95px;top:791px" width="13" height="22" viewBox="0 0 13 22"><path d="M0.8 1.5 L11.2 10.8 L0.8 20.3 Z" fill="none" stroke="#a6a6a6" stroke-width="1.5"/></svg>
<svg class="i" style="left:124px;top:779px" width="40" height="40" viewBox="0 0 40 40"><rect x="14.5" y="8" width="22.5" height="12.5" fill="#a9b9c4" stroke="#8494a0" stroke-width="1"/><path d="M17 12 h2.5 m3 0 h2.5 m3 0 h2.5 m3 0 h2.5 M17 17 h2.5 m3 0 h2.5 m3 0 h2.5 m3 0 h2.5" stroke="#fff" stroke-width="2.2"/><path d="M14.5 20.5 L39 20.5 L39 36 L36 39.4 L33 39.4 L31 34 L22 34 L20 39.4 L17 39.4 L14.5 36 Z" fill="#b8c0c6" stroke="#6a747a" stroke-width="1"/><rect x="22" y="23" width="10" height="2.8" fill="#2aa0e0"/><rect x="17" y="27" width="2.5" height="2.5" fill="#f07020"/><rect x="24" y="28" width="7" height="4" fill="#6a6a6a"/><rect x="0.8" y="1" width="13.5" height="30" rx="4" fill="#c8ccd0" stroke="#7a8088" stroke-width="1.4"/><rect x="5" y="5" width="5" height="18" fill="#fff"/><rect x="5" y="3" width="5" height="4" fill="#3a3a3a"/><rect x="2" y="25" width="11" height="5" fill="#8a9098"/></svg>
<div class="t " style="left:173.4px;top:784.3px;font-size:29px;color:#000;transform:scaleX(0.9783);-webkit-text-stroke:0.3px #fff;">Eingabegeräte (Human Interface Devices</div>
<svg class="i" style="left:95px;top:835px" width="13" height="22" viewBox="0 0 13 22"><path d="M0.8 1.5 L11.2 10.8 L0.8 20.3 Z" fill="none" stroke="#a6a6a6" stroke-width="1.5"/></svg>
<svg class="i" style="left:124px;top:823px" width="40" height="40" viewBox="0 0 40 40"><rect x="10" y="10.4" width="19" height="2" fill="#e4e4e4"/><rect x="5" y="12.4" width="29" height="2.5" fill="#ececec"/><rect x="0.8" y="14.9" width="37.5" height="16" rx="2" fill="#e9eaec" stroke="#9a9ea2" stroke-width="1.6"/><rect x="0.8" y="27.4" width="37.5" height="3.5" fill="#a8acb0"/><rect x="5.5" y="17.9" width="21" height="9" fill="#dfe6f0"/><rect x="28" y="17.9" width="6" height="10" fill="#7a7f84"/><rect x="29.5" y="16.9" width="2.6" height="12" fill="#74c043"/><rect x="19.5" y="25.4" width="17.5" height="11.5" fill="#23915e" stroke="#176b44" stroke-width="1"/><rect x="22.5" y="27.4" width="2.6" height="2.6" fill="#fff"/><rect x="31.5" y="27.4" width="2.6" height="2.6" fill="#fff"/><rect x="22.5" y="32.4" width="2.6" height="2.6" fill="#fff"/><rect x="27.5" y="29.9" width="3" height="2.5" fill="#3a1a1a"/><rect x="21.5" y="37.4" width="13" height="1.8" fill="#f0a020"/></svg>
<div class="t " style="left:173.0px;top:828.0px;font-size:29px;color:#000;transform:scaleX(1.0316);-webkit-text-stroke:0.3px #fff;">IDE ATA/ATAPI-Controller</div>
<svg class="i" style="left:95px;top:879px" width="13" height="22" viewBox="0 0 13 22"><path d="M0.8 1.5 L11.2 10.8 L0.8 20.3 Z" fill="none" stroke="#a6a6a6" stroke-width="1.5"/></svg>
<svg class="i" style="left:124px;top:867px" width="40" height="40" viewBox="0 0 40 40"><rect x="10" y="17.8" width="19" height="2" fill="#e4e4e4"/><rect x="5" y="19.8" width="29" height="2.5" fill="#ececec"/><rect x="0.8" y="22.3" width="37.5" height="16" rx="2" fill="#e9eaec" stroke="#9a9ea2" stroke-width="1.6"/><rect x="0.8" y="34.8" width="37.5" height="3.5" fill="#a8acb0"/><rect x="5.5" y="25.3" width="21" height="9" fill="#dfe6f0"/><rect x="28" y="25.3" width="6" height="10" fill="#7a7f84"/><rect x="29.5" y="24.3" width="2.6" height="12" fill="#74c043"/></svg>
<div class="t " style="left:173.4px;top:871.8px;font-size:29px;color:#000;transform:scaleX(0.9984);-webkit-text-stroke:0.3px #fff;">Laufwerke</div>
<svg class="i" style="left:95px;top:923px" width="13" height="22" viewBox="0 0 13 22"><path d="M0.8 1.5 L11.2 10.8 L0.8 20.3 Z" fill="none" stroke="#a6a6a6" stroke-width="1.5"/></svg>
<svg class="i" style="left:124px;top:911px" width="40" height="40" viewBox="0 0 40 40"><defs><linearGradient id="gMouse" x1="0" y1="0" x2="1" y2="0"><stop offset="0" stop-color="#6a7888"/><stop offset=".18" stop-color="#3e5066"/><stop offset=".34" stop-color="#e4e8ec"/><stop offset=".5" stop-color="#ffffff"/><stop offset=".66" stop-color="#e4e8ec"/><stop offset=".82" stop-color="#3e5066"/><stop offset="1" stop-color="#6a7888"/></linearGradient></defs><path d="M20 0.5 Q9 1 8 8 L5.5 30 Q5 38.5 20 38.5 Q35 38.5 34.5 30 L32 8 Q31 1 20 0.5 Z" fill="url(#gMouse)" stroke="#7a8490" stroke-width="1"/><path d="M7 26 Q8 37 20 37.5 Q32 37 33 26 Q26 31 20 31 Q14 31 7 26 Z" fill="#f4f6f8"/><rect x="15" y="2.5" width="10" height="11" rx="1.5" fill="#c8ccd0" stroke="#1e1e1e" stroke-width="1.8"/><rect x="17.5" y="6" width="5" height="4" fill="#3a6a9a"/><path d="M9 37 Q20 40 31 37" stroke="#555" stroke-width="1.4" fill="none"/></svg>
<div class="t " style="left:173.4px;top:915.6px;font-size:29px;color:#000;transform:scaleX(0.9874);-webkit-text-stroke:0.3px #fff;">Mäuse und andere Zeigegeräte</div>
<svg class="i" style="left:95px;top:966px" width="13" height="22" viewBox="0 0 13 22"><path d="M0.8 1.5 L11.2 10.8 L0.8 20.3 Z" fill="none" stroke="#a6a6a6" stroke-width="1.5"/></svg>
<svg class="i" style="left:124px;top:954px" width="40" height="40" viewBox="0 0 40 40"><rect x="12.5" y="1.4" width="24" height="21" fill="#dcdcdc" stroke="#b8b8b8" stroke-width="1"/><rect x="17" y="5.4" width="15" height="12.6" fill="#0f3d9e"/><rect x="23.30" y="5.4" width="8.70" height="12.6" fill="#3f78c8"/><rect x="24.30" y="6.16" width="7.70" height="1.39" fill="#d8e8f8" opacity="0.85"/><rect x="24.30" y="8.68" width="7.70" height="1.39" fill="#d8e8f8" opacity="0.72"/><rect x="24.30" y="11.20" width="7.70" height="1.39" fill="#d8e8f8" opacity="0.59"/><rect x="24.30" y="13.72" width="7.70" height="1.39" fill="#d8e8f8" opacity="0.46"/><rect x="24.30" y="16.24" width="7.70" height="1.39" fill="#d8e8f8" opacity="0.33"/><rect x="2.5" y="8.4" width="22.5" height="19.4" fill="#e4e4e4" stroke="#b8b8b8" stroke-width="1"/><rect x="7" y="12.4" width="15" height="13" fill="#0f3d9e"/><rect x="13.30" y="12.4" width="8.70" height="13" fill="#3f78c8"/><rect x="14.30" y="13.18" width="7.70" height="1.43" fill="#d8e8f8" opacity="0.85"/><rect x="14.30" y="15.78" width="7.70" height="1.43" fill="#d8e8f8" opacity="0.72"/><rect x="14.30" y="18.38" width="7.70" height="1.43" fill="#d8e8f8" opacity="0.59"/><rect x="14.30" y="20.98" width="7.70" height="1.43" fill="#d8e8f8" opacity="0.46"/><rect x="14.30" y="23.58" width="7.70" height="1.43" fill="#d8e8f8" opacity="0.33"/><rect x="0.5" y="33" width="36" height="7" fill="#dce4e4" stroke="#c0c8c8" stroke-width=".8"/><rect x="15" y="27.8" width="7" height="6" fill="#22aa6a"/><rect x="10" y="33" width="17" height="7" fill="#22aa6a"/></svg>
<div class="t " style="left:173.4px;top:959.3px;font-size:29px;color:#000;transform:scaleX(0.9984);-webkit-text-stroke:0.3px #fff;">Netzwerkadapter</div>
<svg class="i" style="left:95px;top:1010px" width="13" height="22" viewBox="0 0 13 22"><path d="M0.8 1.5 L11.2 10.8 L0.8 20.3 Z" fill="none" stroke="#a6a6a6" stroke-width="1.5"/></svg>
<svg class="i" style="left:124px;top:998px" width="40" height="40" viewBox="0 0 40 40"><path d="M0.5 0.8 L31.5 0.8 L31.5 3 L36.4 3 L36.4 36.7 L0.5 36.7 Z" fill="#5c5c5c"/><rect x="7.5" y="7.8" width="22" height="22" fill="url(#gCpu)"/><rect x="29.4" y="30.3" width="5" height="5" fill="#f0a030"/><path d="M38 4 V36 M1 38.8 H32" stroke="#f0a030" stroke-width="2" stroke-dasharray="2 3"/></svg>
<div class="t " style="left:173.5px;top:1003.1px;font-size:29px;color:#000;transform:scaleX(0.9551);-webkit-text-stroke:0.3px #fff;">Prozessoren</div>
<svg class="i" style="left:95px;top:1054px" width="13" height="22" viewBox="0 0 13 22"><path d="M0.8 1.5 L11.2 10.8 L0.8 20.3 Z" fill="none" stroke="#a6a6a6" stroke-width="1.5"/></svg>
<svg class="i" style="left:124px;top:1042px" width="40" height="40" viewBox="0 0 40 40"><rect x="10" y="17.8" width="19" height="2" fill="#e4e4e4"/><rect x="5" y="19.8" width="29" height="2.5" fill="#ececec"/><rect x="0.8" y="22.3" width="37.5" height="16" rx="2" fill="#e9eaec" stroke="#9a9ea2" stroke-width="1.6"/><rect x="0.8" y="34.8" width="37.5" height="3.5" fill="#a8acb0"/><rect x="5.5" y="25.3" width="21" height="9" fill="#dfe6f0"/><rect x="28" y="25.3" width="6" height="10" fill="#7a7f84"/><rect x="29.5" y="24.3" width="2.6" height="12" fill="#74c043"/></svg>
<div class="t " style="left:173.4px;top:1046.9px;font-size:29px;color:#000;transform:scaleX(0.9764);-webkit-text-stroke:0.3px #fff;">RAM Disk drives</div>
<svg class="i" style="left:95px;top:1098px" width="13" height="22" viewBox="0 0 13 22"><path d="M0.8 1.5 L11.2 10.8 L0.8 20.3 Z" fill="none" stroke="#a6a6a6" stroke-width="1.5"/></svg>
<svg class="i" style="left:124px;top:1086px" width="40" height="40" viewBox="0 0 40 40"><path d="M22 3 L4 19.5 L22 36" stroke="#6a6a6a" stroke-width="6.5" fill="none"/><path d="M20 3 L29 11" stroke="#a8a8a8" stroke-width="6"/><path d="M21 36 L29 28" stroke="#6a6a6a" stroke-width="6"/><rect x="22.6" y="16.8" width="16.2" height="5.9" fill="#7a7a7a"/><rect x="22.6" y="16.8" width="16.2" height="2" fill="#a0a0a0"/></svg>
<div class="t " style="left:174.4px;top:1090.7px;font-size:29px;color:#000;transform:scaleX(1.0032);-webkit-text-stroke:0.3px #fff;">Speichercontroller</div>
<svg class="i" style="left:95px;top:1141px" width="13" height="22" viewBox="0 0 13 22"><path d="M0.8 1.5 L11.2 10.8 L0.8 20.3 Z" fill="none" stroke="#a6a6a6" stroke-width="1.5"/></svg>
<svg class="i" style="left:124px;top:1129px" width="40" height="40" viewBox="0 0 40 40"><rect x="0.5" y="13" width="7" height="24" fill="#d8d8d8" stroke="#a8a8a8" stroke-width="1"/><rect x="1" y="15" width="6" height="2" fill="#555"/><rect x="1" y="17.5" width="6" height="2" fill="#74c043"/><rect x="15" y="29.5" width="17" height="2" fill="#d0d0d0"/><rect x="13" y="33.5" width="21" height="3.3" fill="#d4d4d4" stroke="#b8b8b8" stroke-width=".8"/><rect x="8.5" y="3.5" width="30" height="26" fill="#e2e2e2" stroke="#c4c4c4" stroke-width="1.2"/><rect x="12" y="7.8" width="22.2" height="17" fill="#0f3d9e"/><rect x="21.32" y="7.8" width="12.88" height="17" fill="#3f78c8"/><rect x="22.32" y="8.82" width="11.88" height="1.87" fill="#d8e8f8" opacity="0.85"/><rect x="22.32" y="12.22" width="11.88" height="1.87" fill="#d8e8f8" opacity="0.72"/><rect x="22.32" y="15.62" width="11.88" height="1.87" fill="#d8e8f8" opacity="0.59"/><rect x="22.32" y="19.02" width="11.88" height="1.87" fill="#d8e8f8" opacity="0.46"/><rect x="22.32" y="22.42" width="11.88" height="1.87" fill="#d8e8f8" opacity="0.33"/></svg>
<div class="t " style="left:174.4px;top:1134.4px;font-size:29px;color:#000;transform:scaleX(0.9755);-webkit-text-stroke:0.3px #fff;">Systemgeräte</div>
<svg class="i" style="left:95px;top:1185px" width="13" height="22" viewBox="0 0 13 22"><path d="M0.8 1.5 L11.2 10.8 L0.8 20.3 Z" fill="none" stroke="#a6a6a6" stroke-width="1.5"/></svg>
<svg class="i" style="left:124px;top:1173px" width="40" height="40" viewBox="0 0 40 40"><path d="M1 22 Q1.5 11 8 10.5 L31 10.5 Q37.5 11 38 22 L38 27 L1 27 Z" fill="#f2f2f2" stroke="#a0a0a0" stroke-width="1.4"/><path d="M5 15 H34 M4 19 H35 M3.5 23 H35.5" stroke="#c4c4c4" stroke-width="1.8" stroke-dasharray="1.5 1.5"/><rect x="0.5" y="25" width="38" height="5" rx="2" fill="#404040"/><rect x="3" y="25.5" width="33" height="1.5" fill="#8a8a8a"/></svg>
<div class="t " style="left:175.1px;top:1178.2px;font-size:29px;color:#000;transform:scaleX(1.0078);-webkit-text-stroke:0.3px #fff;">Tastaturen</div>
<svg class="i" style="left:95px;top:1229px" width="13" height="22" viewBox="0 0 13 22"><path d="M0.8 1.5 L11.2 10.8 L0.8 20.3 Z" fill="none" stroke="#a6a6a6" stroke-width="1.5"/></svg>
<svg class="i" style="left:124px;top:1217px" width="40" height="40" viewBox="0 0 40 40"><rect x="12.2" y="1.5" width="14.3" height="13.1" fill="#f0f0f0" stroke="#a0a0a0" stroke-width="1.4"/><rect x="15" y="5" width="3" height="3" fill="#c8c8c8"/><rect x="21" y="5" width="3" height="3" fill="#c8c8c8"/><path d="M10 14.6 L29.8 14.6 L29.8 29 L23 33.3 L16 33.3 L10 29 Z" fill="#6a6a6a"/><rect x="10" y="14.6" width="19.8" height="3.5" fill="#9a9a9a"/><rect x="16.6" y="33" width="5.4" height="7" fill="#555"/></svg>
<div class="t " style="left:173.5px;top:1222.0px;font-size:29px;color:#000;transform:scaleX(0.9955);-webkit-text-stroke:0.3px #fff;">USB-Controller</div>
<div class="b" style="left:697px;top:324px;width:1351px;height:873px;overflow:hidden">
<div class="b" style="left:0px;top:0px;width:1351px;height:873px;background:#5fb6d4"></div>
<div class="b" style="left:0px;top:0px;width:1351px;height:3px;background:linear-gradient(#3f8ba5 0,#3f8ba5 2px,#539fb9 2px)"></div>
<div class="b" style="left:0px;top:0px;width:3px;height:873px;background:linear-gradient(90deg,#3f8ba5 0,#3f8ba5 2px,#539fb9 2px)"></div>
<div class="b" style="left:0px;top:871px;width:1351px;height:2px;background:#55a7c3"></div>
</div>
<div class="b" style="left:1960px;top:327px;width:78px;height:50px;background:#e5545f"></div>
<svg class="i" style="left:1990px;top:344.3px" width="20.4" height="18.4" viewBox="0 0 20.40 18.41" fill="#fff" shape-rendering="crispEdges"><rect x="0.00" y="0.00" width="2.60" height="2.68"/><rect x="2.55" y="0.00" width="2.60" height="2.68"/><rect x="15.30" y="0.00" width="2.60" height="2.68"/><rect x="17.85" y="0.00" width="2.60" height="2.68"/><rect x="2.55" y="2.63" width="2.60" height="2.68"/><rect x="5.10" y="2.63" width="2.60" height="2.68"/><rect x="12.75" y="2.63" width="2.60" height="2.68"/><rect x="15.30" y="2.63" width="2.60" height="2.68"/><rect x="5.10" y="5.26" width="2.60" height="2.68"/><rect x="7.65" y="5.26" width="2.60" height="2.68"/><rect x="10.20" y="5.26" width="2.60" height="2.68"/><rect x="12.75" y="5.26" width="2.60" height="2.68"/><rect x="7.65" y="7.89" width="2.60" height="2.68"/><rect x="10.20" y="7.89" width="2.60" height="2.68"/><rect x="5.10" y="10.52" width="2.60" height="2.68"/><rect x="7.65" y="10.52" width="2.60" height="2.68"/><rect x="10.20" y="10.52" width="2.60" height="2.68"/><rect x="12.75" y="10.52" width="2.60" height="2.68"/><rect x="2.55" y="13.15" width="2.60" height="2.68"/><rect x="5.10" y="13.15" width="2.60" height="2.68"/><rect x="12.75" y="13.15" width="2.60" height="2.68"/><rect x="15.30" y="13.15" width="2.60" height="2.68"/><rect x="0.00" y="15.78" width="2.60" height="2.68"/><rect x="2.55" y="15.78" width="2.60" height="2.68"/><rect x="15.30" y="15.78" width="2.60" height="2.68"/><rect x="17.85" y="15.78" width="2.60" height="2.68"/></svg>
<svg class="i" style="left:730px;top:424px" width="48" height="48" viewBox="0 0 48 48"><circle cx="24" cy="23.7" r="22.3" fill="#bfe1f0" stroke="#a9b9c0" stroke-width="1.8"/><path d="M11 23.5 L23.5 12.5 L26 15 L18 22 L37.5 22 L37.5 26.5 L18 26.5 L26 33.5 L23.5 36 Z" fill="#a9b9c1"/></svg>
<svg class="i" style="left:815px;top:427px" width="26" height="40" viewBox="0 0 26 40"><rect x="4.2" y="1.8" width="18.6" height="31.4" fill="#fafafa" stroke="#b4b4b4" stroke-width="2"/><rect x="8" y="7" width="2" height="25" fill="#a8a8a8"/><rect x="15.6" y="7" width="2" height="25" fill="#a8a8a8"/><rect x="10" y="5.6" width="5.2" height="4.5" fill="#8cc63f"/><rect x="5.4" y="33.2" width="14.6" height="2.6" fill="#4a4a4a"/><rect x="0.3" y="35.8" width="24.7" height="2.5" fill="#6e6e6e"/></svg>
<div class="t " style="left:860.3px;top:428.7px;font-size:37px;color:#4a5a62;transform:scaleX(1.0032);-webkit-text-stroke:0.6px #5fb6d4;">Treibersoftware aktualisieren - Unbekanntes Gerät</div>
<div class="b" style="left:715px;top:499px;width:1322px;height:683px;background:#4596ae"></div>
<div class="b" style="left:717px;top:501px;width:1318px;height:679px;background:#fff"></div>
<div class="t " style="left:811.3px;top:557.1px;font-size:39.5px;color:#2045a0;transform:scaleX(0.9797);-webkit-text-stroke:0.6px #fff;">Wie möchten Sie nach Treibersoftware suchen?</div>
<div class="b" style="left:816px;top:677px;width:1184px;height:235px;border:2px solid #d2ebf6;border-radius:4px;box-sizing:border-box;background:#fff"></div>
<svg class="i" style="left:835px;top:712px" width="44" height="44" viewBox="0 0 44 44"><ellipse cx="14" cy="24" rx="15" ry="13" fill="url(#gShadow)"/><path d="M5.4 15.2 L18 15.2 L18 5 L22.5 5 L35.5 19 L35.5 21.5 L22.5 35 L18 35 L18 24.7 L5.4 24.7 Z" fill="#38aa3c"/><rect x="7" y="20" width="11" height="4" fill="#5cba60" opacity=".5"/></svg>
<div class="t " style="left:895.5px;top:710.8px;font-size:39.5px;color:#212870;transform:scaleX(0.9930);-webkit-text-stroke:0.6px #fff;">Automatisch nach aktueller Treibersoftware suchen</div>
<div class="t " style="left:895.5px;top:762.0px;font-size:29.5px;color:#212870;transform:scaleX(1.0270);-webkit-text-stroke:0.55px #fff;">Auf dem Computer und im Internet wird nach aktueller Treibersoftware für das</div>
<div class="t " style="left:894.0px;top:799.3px;font-size:29.5px;color:#212870;transform:scaleX(1.0031);-webkit-text-stroke:0.55px #fff;">Gerät gesucht, sofern das Feature nicht in den Geräteinstallationseinstellungen</div>
<div class="t " style="left:894.3px;top:836.7px;font-size:29.5px;color:#212870;transform:scaleX(1.0295);-webkit-text-stroke:0.55px #fff;">deaktiviert wurde.</div>
<svg class="i" style="left:835px;top:968px" width="44" height="44" viewBox="0 0 44 44"><ellipse cx="14" cy="24" rx="15" ry="13" fill="url(#gShadow)"/><path d="M5.4 15.2 L18 15.2 L18 5 L22.5 5 L35.5 19 L35.5 21.5 L22.5 35 L18 35 L18 24.7 L5.4 24.7 Z" fill="#38aa3c"/><rect x="7" y="20" width="11" height="4" fill="#5cba60" opacity=".5"/></svg>
<div class="t " style="left:896.0px;top:967.6px;font-size:39.5px;color:#212870;transform:scaleX(0.9925);-webkit-text-stroke:0.6px #fff;">Auf dem Computer nach Treibersoftware suchen.</div>
<div class="t " style="left:894.9px;top:1018.3px;font-size:29.5px;color:#212870;transform:scaleX(1.0157);-webkit-text-stroke:0.55px #fff;">Treibersoftware manuell suchen und installieren.</div>
<div class="b" style="left:717px;top:1077px;width:1318px;height:103px;background:#fff"></div>
<div class="b" style="left:718px;top:1078px;width:1316px;height:101px;background:#f3f3f3"></div>
<div class="b" style="left:717px;top:1077px;width:1318px;height:1px;background:#dfdfdf"></div>
<div class="b" style="left:1787px;top:1102px;width:221px;height:52px;border:2px solid #adadad;box-sizing:border-box;background:linear-gradient(#f0f0f0,#e5e5e5)"></div>
<div class="t " style="left:1825.0px;top:1114.3px;font-size:29.5px;color:#000;transform:scaleX(1.0198);-webkit-text-stroke:0.55px #ebebeb;">Abbrechen</div>
</body></html>
